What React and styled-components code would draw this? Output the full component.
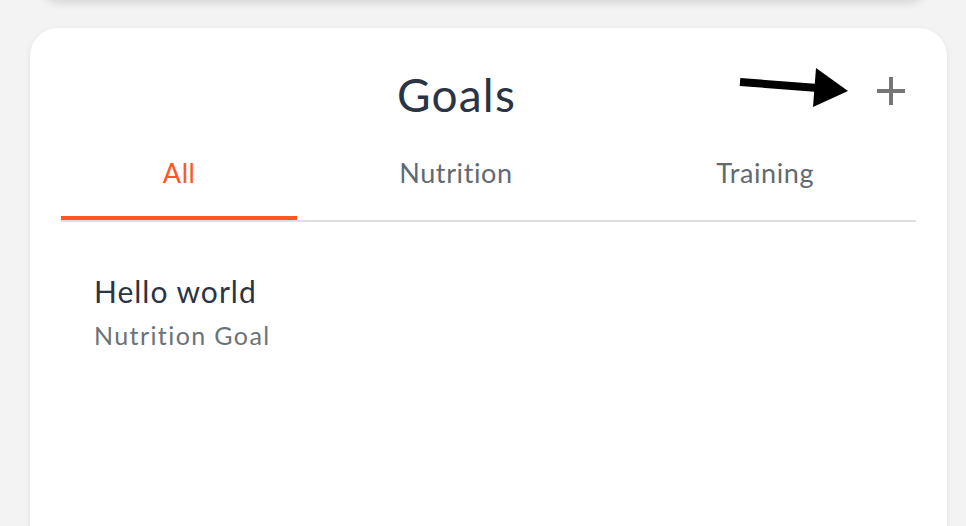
import { useState } from 'react'
import styled, { createGlobalStyle } from 'styled-components'

const GlobalStyle = createGlobalStyle`
  html, body {
    margin: 0;
    padding: 0;
    background: #f3f3f3;
    font-family: Lato, "Noto Sans", sans-serif;
    font-variant-ligatures: none;
    overflow: hidden;
  }
`

const Page = styled.div`
  position: relative;
  width: 966px;
  height: 526px;
  overflow: hidden;
`

const PrevCard = styled.div`
  height: 20px;
  margin: -20px 38px 0 40px;
  background: #f3f3f3;
  border-radius: 0 0 24px 24px;
  box-shadow: 0 3px 8px rgba(0, 0, 0, 0.12);
`

const Card = styled.div`
  margin: 28px 19px 0 30px;
  min-height: 620px;
  background: #fff;
  border-radius: 28px;
  box-shadow: 0 2px 6px rgba(0, 0, 0, 0.08);
  padding: 0 31px;
`

const Header = styled.div`
  display: flex;
  align-items: flex-start;
  padding: 39px 0 23px;
`

const Title = styled.h1`
  flex: 1;
  margin: 0;
  text-align: center;
  font-size: 46px;
  line-height: 56px;
  font-weight: 400;
  letter-spacing: 1.2px;
  color: #2b3445;
`

const AddButton = styled.button`
  width: 64px;
  height: 28px;
  margin-top: 10px;
  padding: 0 11px 0 0;
  border: none;
  background: none;
  display: flex;
  justify-content: flex-end;
  cursor: pointer;
`

const TabRow = styled.div`
  display: flex;
  border-bottom: 2px solid #dedede;
`

const Tab = styled.button`
  flex: 1 1 auto;
  padding: 11px 0 27px;
  border: none;
  border-bottom: 4px solid ${p => (p.$active ? '#ff5722' : 'transparent')};
  background: none;
  font-family: inherit;
  font-variant-ligatures: none;
  font-size: 27px;
  line-height: 32px;
  letter-spacing: 0.6px;
  color: ${p => (p.$active ? '#ff5722' : '#5f6a72')};
  cursor: pointer;
`

const List = styled.div`
  padding: 51px 33px;
`

const ItemTitle = styled.div`
  font-size: 30px;
  line-height: 36px;
  letter-spacing: 1px;
  color: #2b3445;
`

const ItemSub = styled.div`
  margin-top: 11px;
  font-size: 25px;
  line-height: 30px;
  letter-spacing: 1.4px;
  color: #6a7378;
`

const Annotation = styled.svg`
  position: absolute;
  left: 0;
  top: 0;
  pointer-events: none;
`

const tabs = ['All', 'Nutrition', 'Training']

export default function App() {
  const [active, setActive] = useState('All')

  return (
    <Page>
      <GlobalStyle />
      <PrevCard />
      <Card>
        <Header>
          <Title>Goals</Title>
          <AddButton aria-label="Add goal">
            <svg width="28" height="28" viewBox="0 0 28 28">
              <path d="M14 0v28M0 14h28" stroke="#767676" strokeWidth="4" />
            </svg>
          </AddButton>
        </Header>
        <TabRow>
          {tabs.map(t => (
            <Tab key={t} $active={t === active} onClick={() => setActive(t)}>{t}</Tab>
          ))}
        </TabRow>
        <List>
          <ItemTitle>Hello world</ItemTitle>
          <ItemSub>Nutrition Goal</ItemSub>
        </List>
      </Card>
      <Annotation width="966" height="526" viewBox="0 0 966 526">
        <path d="M740 82L818 88" stroke="#000" strokeWidth="8" />
        <polygon points="816,68 848,91 813,107" fill="#000" />
      </Annotation>
    </Page>
  )
}
